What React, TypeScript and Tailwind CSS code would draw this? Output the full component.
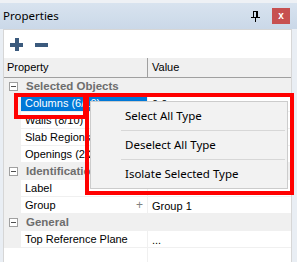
import React from 'react'

type Row =
  | { kind: 'cat'; label: string }
  | { kind: 'prop'; label: string; value: string; selected?: boolean; plus?: boolean }

const ROWS: Row[] = [
  { kind: 'cat', label: 'Selected Objects' },
  { kind: 'prop', label: 'Columns (6/10)', value: '0.0', selected: true },
  { kind: 'prop', label: 'Walls (8/10)', value: '' },
  { kind: 'prop', label: 'Slab Regions (2/2)', value: '' },
  { kind: 'prop', label: 'Openings (2/2)', value: '' },
  { kind: 'cat', label: 'Identification' },
  { kind: 'prop', label: 'Label', value: '...' },
  { kind: 'prop', label: 'Group', value: 'Group 1', plus: true },
  { kind: 'cat', label: 'General' },
  { kind: 'prop', label: 'Top Reference Plane', value: '...' },
]

const Collapse = () => (
  <div className="w-[9px] h-[9px] border border-[#a0a0a0] bg-white flex items-center justify-center">
    <div className="w-[5px] h-px bg-[#505050]" />
  </div>
)

const Pin = () => (
  <svg width="9" height="11" viewBox="0 0 9 11" shapeRendering="crispEdges">
    <rect x="2" y="0" width="5" height="1" fill="#000" />
    <rect x="2" y="0" width="1" height="6" fill="#000" />
    <rect x="5" y="0" width="2" height="6" fill="#000" />
    <rect x="0" y="6" width="9" height="1" fill="#000" />
    <rect x="4" y="7" width="1" height="4" fill="#000" />
  </svg>
)

const App = () => {
  return (
    <div
      className="relative w-[297px] h-[262px] overflow-hidden bg-[#e9eef4]"
      style={{ fontFamily: '"Liberation Sans", Arial, sans-serif' }}
    >
      <div className="h-[3px] bg-[#eef1f5]" />
      {/* title bar */}
      <div className="h-[26px] flex items-center pl-[3px] pr-[7px] bg-gradient-to-b from-[#d8e3ef] to-[#cad8e8]">
        <span className="text-[11.5px] text-black" style={{ fontFamily: '"Noto Sans", sans-serif' }}>
          Properties
        </span>
        <div className="ml-auto mr-[12px] mt-px">
          <Pin />
        </div>
        <div className="w-[18px] h-[16px] bg-[#c75050] flex items-center justify-center text-white text-[10px] font-bold leading-none pb-px">
          x
        </div>
      </div>

      {/* panel */}
      <div className="ml-[3px] mr-[5px] border border-[#d6d6d6] bg-white">
        <div className="h-[28px] flex items-center gap-[12px] pl-[6px]">
          <svg width="13" height="13" viewBox="0 0 13 13" shapeRendering="crispEdges">
            <rect x="4.5" y="0" width="4" height="13" fill="#3b5a7d" />
            <rect x="0" y="4.5" width="13" height="4" fill="#3b5a7d" />
          </svg>
          <svg width="13" height="13" viewBox="0 0 13 13" shapeRendering="crispEdges">
            <rect x="0" y="4.5" width="13" height="4" fill="#3b5a7d" />
          </svg>
        </div>

        {/* header */}
        <div className="h-[20px] flex bg-[#f0f0f0] border-b border-[#a0a0a0] text-[11px] text-black">
          <div className="w-[144px] flex items-center pl-[3px] border-r border-[#a0a0a0]">Property</div>
          <div className="flex items-center pl-[4px]">Value</div>
        </div>

        {ROWS.map((r, i) =>
          r.kind === 'cat' ? (
            <div key={i} className="h-[17px] flex items-center bg-[#f0f0f0] pl-[5px]">
              <Collapse />
              <span className="ml-[8px] text-[11.5px] font-bold text-[#6d6d6d]">{r.label}</span>
            </div>
          ) : (
            <div key={i} className="h-[17px] flex bg-[#f0f0f0] text-[11px]">
              <div className="w-[17px]" />
              <div
                className={
                  'w-[127px] flex items-center pl-[4px] pr-[4px] border-b border-r border-[#f0f0f0] whitespace-nowrap overflow-hidden ' +
                  (r.selected ? 'bg-[#0078d7] text-white' : 'bg-white text-black')
                }
              >
                <span className="flex-1">{r.label}</span>
                {r.plus && <span className="text-[#808080] text-[12px]">+</span>}
              </div>
              <div className="flex-1 flex items-start pt-px pl-[4px] bg-white border-b border-[#f0f0f0] text-black">
                {r.value}
              </div>
            </div>
          )
        )}
        <div className="h-[20px] flex">
          <div className="w-[144px] border-r border-[#f0f0f0]" />
        </div>
      </div>

      {/* context menu */}
      <div
        className="absolute left-[90px] top-[101px] w-[198px] h-[88px] bg-[#f2f2f2] border border-[#cccccc] flex flex-col text-[11.5px] text-black"
        style={{ fontFamily: '"Noto Sans", sans-serif' }}
      >
        <div className="h-[28px] flex items-center pl-[34px]">Select All Type</div>
        <div className="h-px bg-[#d7d7d7] ml-[30px] mr-[2px]" />
        <div className="h-[28px] flex items-center pl-[34px]">Deselect All Type</div>
        <div className="h-px bg-[#d7d7d7] ml-[30px] mr-[2px]" />
        <div className="h-[28px] flex items-center pl-[34px]">Isolate Selected Type</div>
      </div>

      {/* annotation boxes */}
      <div className="absolute left-[14px] top-[93px] w-[73px] h-[26px] border-[4px] border-[#ff0000]" />
      <div className="absolute left-[85px] top-[93px] w-[209px] h-[102px] border-[4px] border-[#ff0000]" />
    </div>
  )
}

export default App
